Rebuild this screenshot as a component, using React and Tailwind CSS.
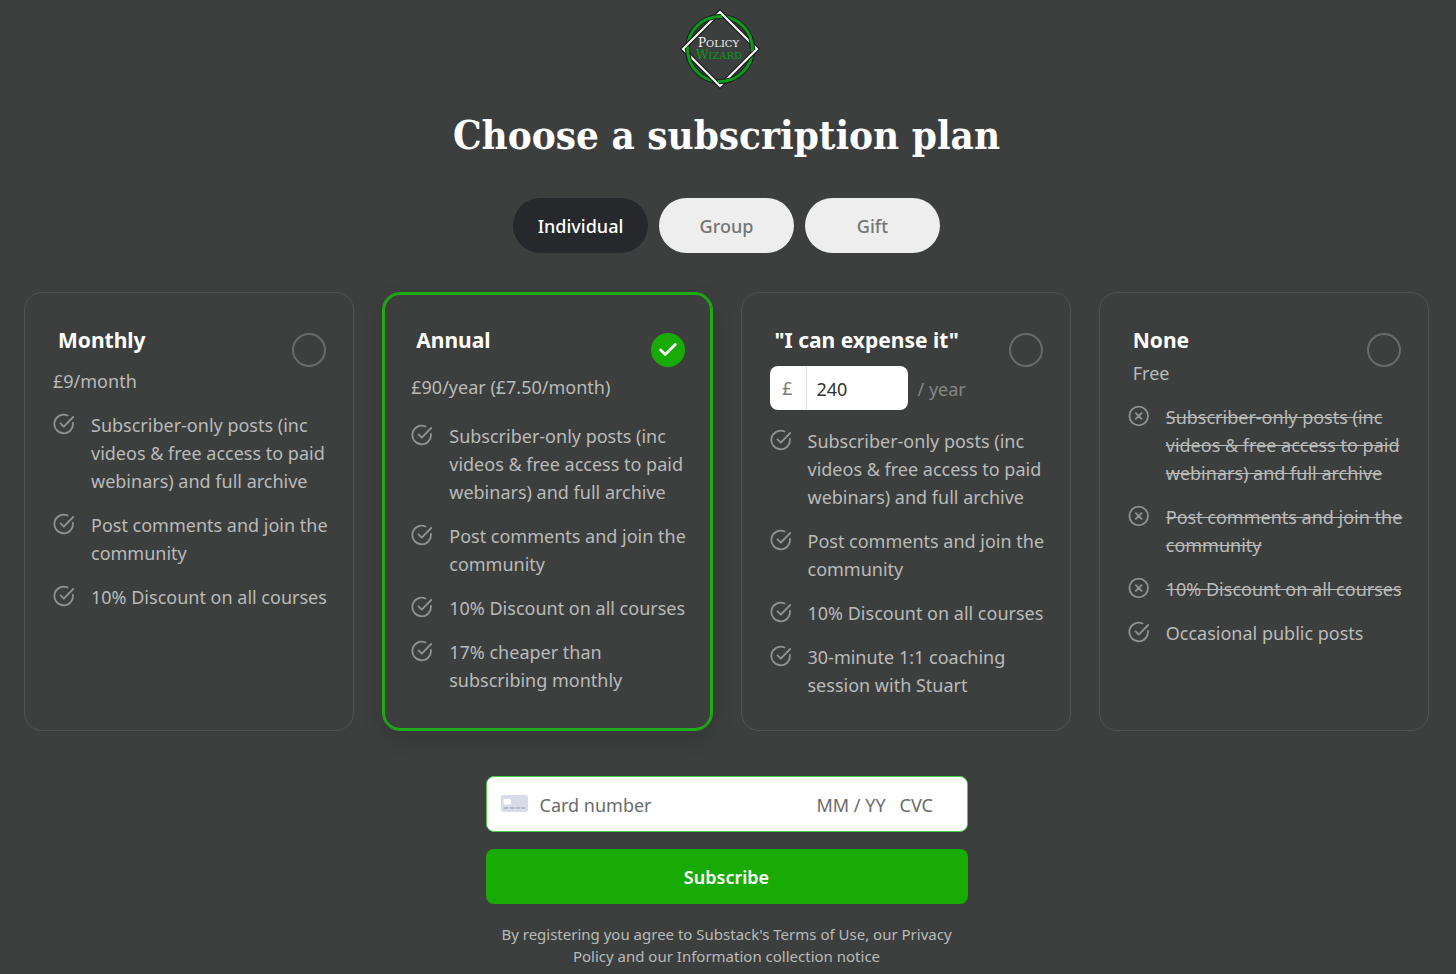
import { useState } from 'react';
import { Check } from 'lucide-react';

const ARCHIVE = 'Subscriber-only posts (inc videos & free access to paid webinars) and full archive';
const COMMENTS = 'Post comments and join the community';
const DISCOUNT = '10% Discount on all courses';

const plans = [
  {
    id: 'monthly',
    name: 'Monthly',
    price: '£9/month',
    priceClass: 'mt-[13px]',
    listClass: 'mt-4',
    features: [{ text: ARCHIVE }, { text: COMMENTS }, { text: DISCOUNT }],
  },
  {
    id: 'annual',
    name: 'Annual',
    price: '£90/year (£7.50/month)',
    priceClass: 'mt-[19px]',
    listClass: 'mt-[21px]',
    features: [
      { text: ARCHIVE },
      { text: COMMENTS },
      { text: DISCOUNT },
      { text: '17% cheaper than subscribing monthly' },
    ],
  },
  {
    id: 'founding',
    name: '"I can expense it"',
    custom: true,
    listClass: 'mt-[17px]',
    features: [
      { text: ARCHIVE },
      { text: COMMENTS },
      { text: DISCOUNT },
      { text: '30-minute 1:1 coaching session with Stuart' },
    ],
  },
  {
    id: 'none',
    name: 'None',
    price: 'Free',
    priceClass: 'mt-[5px] pl-[5px]',
    listClass: 'mt-4',
    features: [
      { text: ARCHIVE, excluded: true },
      { text: COMMENTS, excluded: true },
      { text: DISCOUNT, excluded: true },
      { text: 'Occasional public posts' },
    ],
  },
];

function Logo() {
  return (
    <svg className="w-20 h-20" viewBox="0 0 80 80" fill="none" role="img" aria-label="Policy Wizard">
      <circle cx="40" cy="40" r="32.5" stroke="#1c241d" strokeWidth="5" />
      <circle cx="40" cy="40" r="32.5" stroke="#0b9a1b" strokeWidth="3" />
      <path d="M40 3 77 40 40 77 3 40Z" stroke="#1c1d1d" strokeWidth="4.5" />
      <path d="M40 3 77 40 40 77 3 40Z" stroke="#f2f2f2" strokeWidth="2.2" />
      {/* the ring passes over the diamond once on each side */}
      {[0, 90, 180, 270].map((angle) => (
        <g key={angle} transform={`rotate(${angle} 40 40)`}>
          <path d="M29.5 9.2A32.5 32.5 0 0 1 41 7.5" stroke="#1c241d" strokeWidth="5" />
          <path d="M28.5 9.6A32.5 32.5 0 0 1 42 7.6" stroke="#0b9a1b" strokeWidth="3" />
        </g>
      ))}
      <text x="18" y="38" fill="#f4f4f4" fontSize="12" fontFamily="DejaVu Serif, serif">
        P<tspan fontSize="10">OLICY</tspan>
      </text>
      <text x="16" y="50" fill="#0b9a1b" fontSize="12" fontFamily="DejaVu Serif, serif">
        W<tspan fontSize="10">IZARD</tspan>
      </text>
    </svg>
  );
}

function FeatureIcon({ excluded }) {
  return (
    <svg
      className="w-[22px] h-[22px] mt-[2px] shrink-0 text-[#919292]"
      viewBox="0 0 22 22"
      fill="none"
      stroke="currentColor"
      strokeWidth="1.8"
      strokeLinecap="round"
      strokeLinejoin="round"
    >
      {excluded ? (
        <>
          <circle cx="10.7" cy="11" r="9.3" />
          <path d="m7.8 8.1 5.8 5.8M13.6 8.1l-5.8 5.8" />
        </>
      ) : (
        <>
          <path d="M19.9 9.8A9.3 9.3 0 1 1 14.5 2.5" />
          <path d="m7.5 10.4 3.3 3.3L20.2 4" />
        </>
      )}
    </svg>
  );
}

function PlanCard({ plan, selected, onSelect }) {
  return (
    <section
      className={`rounded-[18px] border pt-[33px] pb-[31px] pl-7 pr-[22px] ${
        selected
          ? 'border-[#1fab14] inset-ring-2 inset-ring-[#1fab14] shadow-[0_8px_20px_rgba(0,0,0,0.15)]'
          : 'border-[#505252]'
      }`}
    >
      <div className="flex items-start justify-between pr-[5px]">
        <div>
          <h2 className="pl-[5px] text-[21px] leading-7 font-bold text-white">
            <label htmlFor={plan.id}>{plan.name}</label>
          </h2>
          {plan.custom ? (
            <div className="mt-3 flex items-center">
              <div className="flex h-11 w-[138px] overflow-hidden rounded-lg bg-white">
                <span className="flex w-[37px] items-center justify-center border-r border-[#dddddd] text-[#777777]">£</span>
                <input
                  aria-label="Amount per year"
                  defaultValue="240"
                  className="w-0 grow px-[10px] pt-[2px] text-[#333333] outline-none"
                />
              </div>
              <span className="ml-[10px] pt-[2px] text-[#858787]">/ year</span>
            </div>
          ) : (
            <p className={`leading-7 text-[#b9baba] ${plan.priceClass}`}>{plan.price}</p>
          )}
        </div>
        <span className="mt-[7px] grid shrink-0 place-items-center">
          <input
            type="radio"
            name="plan"
            id={plan.id}
            checked={selected}
            onChange={onSelect}
            className="col-start-1 row-start-1 h-[34px] w-[34px] appearance-none rounded-full border-2 border-[#696b6b] checked:border-[#17ab03] checked:bg-[#17ab03]"
          />
          {selected && (
            <Check className="pointer-events-none col-start-1 row-start-1 h-[22px] w-[22px] text-white" strokeWidth={3} />
          )}
        </span>
      </div>

      <ul className={`flex flex-col gap-4 ${plan.listClass}`}>
        {plan.features.map((feature) => (
          <li key={feature.text} className="flex gap-4 leading-7 text-[#b9baba]">
            <FeatureIcon excluded={feature.excluded} />
            <span className={feature.excluded ? 'line-through' : ''}>{feature.text}</span>
          </li>
        ))}
      </ul>
    </section>
  );
}

export default function App() {
  const [tab, setTab] = useState('Individual');
  const [selected, setSelected] = useState('annual');

  return (
    <div className="min-h-screen bg-[#3d3f3e] font-['Noto_Sans','Open_Sans',sans-serif] text-[18px]">
      <header className="flex justify-center pt-[9px] pr-4">
        <Logo />
      </header>

      <main className="pl-6 pr-[27px]">
        <h1 className="mt-4 text-center font-['DejaVu_Serif_Condensed','DejaVu_Serif',serif] text-[40px] leading-[60px] font-bold text-white">
          Choose a subscription plan
        </h1>

        <div className="mt-[33px] flex justify-center gap-[11px]">
          {['Individual', 'Group', 'Gift'].map((name) => (
            <button
              key={name}
              type="button"
              onClick={() => setTab(name)}
              className={`h-[55px] w-[135px] rounded-full pt-[2px] font-medium ${
                tab === name ? 'bg-[#27282b] text-white' : 'bg-[#eeeeee] text-[#757575]'
              }`}
            >
              {name}
            </button>
          ))}
        </div>

        <div className="mt-[39px] grid grid-cols-4 gap-7">
          {plans.map((plan) => (
            <PlanCard
              key={plan.id}
              plan={plan}
              selected={selected === plan.id}
              onSelect={() => setSelected(plan.id)}
            />
          ))}
        </div>

        <form className="mx-auto mt-[45px] max-w-[482px]" onSubmit={(e) => e.preventDefault()}>
          <div className="flex h-14 items-center rounded-lg border border-[#4fca45] bg-white pl-[14px] pr-[22px]">
            <svg className="h-[18px] w-[27px] shrink-0" viewBox="0 0 27 18">
              <rect width="27" height="17" rx="2" fill="#d9dce8" />
              <rect x="2.5" y="4" width="7.5" height="5.5" rx="1" fill="#fff" />
              <path d="M3 13h4.5M9 13h4.5M14.500 13h4.500M20 13h4.500" stroke="#a9aec2" strokeWidth="1.500" />
            </svg>
            <input
              aria-label="Card number"
              placeholder="Card number"
              className="ml-3 w-0 grow pt-[2px] outline-none placeholder:text-[#6b6b6b]"
            />
            <input
              aria-label="Expiry date"
              placeholder="MM / YY"
              className="w-[83px] pt-[2px] outline-none placeholder:text-[#6b6b6b]"
            />
            <input
              aria-label="CVC"
              placeholder="CVC"
              className="w-[45px] pt-[2px] outline-none placeholder:text-[#6b6b6b]"
            />
          </div>
          <button type="submit" className="mt-[17px] h-[55px] w-full rounded-lg bg-[#17ab03] pt-[2px] font-semibold text-white">
            Subscribe
          </button>
          <p className="mt-[19px] px-2 text-center text-[15px] leading-[22px] text-[#b9baba]">
            By registering you agree to Substack's <a href="#terms">Terms of Use</a>, our{' '}
            <a href="#privacy">Privacy Policy</a> and our <a href="#notice">Information collection notice</a>
          </p>
        </form>
      </main>
    </div>
  );
}
